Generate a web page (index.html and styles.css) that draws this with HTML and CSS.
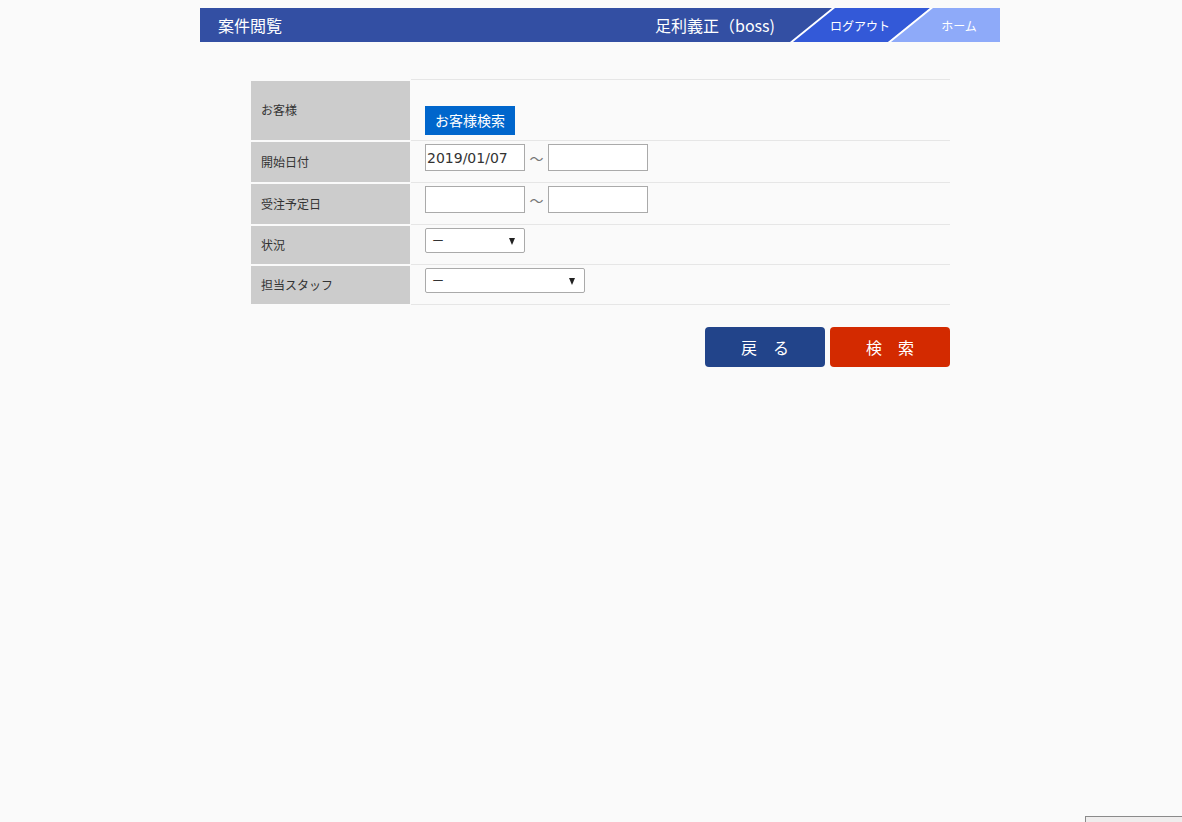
FILE: index.html
```html
<!DOCTYPE html>
<html lang="ja">
<head>
<meta charset="utf-8">
<title>案件閲覧</title>
<link rel="stylesheet" href="styles.css">
</head>
<body>
<div class="page">
  <header class="header">
    <h1 class="title">案件閲覧</h1>
    <div class="user">足利義正（boss)</div>
    <nav class="tabs">
      <a class="tab tab-logout" href="#">ログアウト</a>
      <a class="tab tab-home" href="#">ホーム</a>
    </nav>
  </header>

  <form class="search">
    <div class="rows">
      <div class="row row-first row-tall">
        <div class="label">お客様</div>
        <div class="value value-customer">
          <button type="button" class="btn-customer">お客様検索</button>
        </div>
      </div>
      <div class="row row-mid">
        <div class="label">開始日付</div>
        <div class="value">
          <span class="range">
            <input class="date" type="text" value="2019/01/07">
            <span class="tilde">～</span>
            <input class="date" type="text" value="">
          </span>
        </div>
      </div>
      <div class="row row-mid">
        <div class="label">受注予定日</div>
        <div class="value">
          <span class="range">
            <input class="date" type="text" value="">
            <span class="tilde">～</span>
            <input class="date" type="text" value="">
          </span>
        </div>
      </div>
      <div class="row row-short">
        <div class="label">状況</div>
        <div class="value">
          <span class="select select-sm"><span class="select-text">ー</span></span>
        </div>
      </div>
      <div class="row row-short">
        <div class="label">担当スタッフ</div>
        <div class="value">
          <span class="select select-lg"><span class="select-text">ー</span></span>
        </div>
      </div>
    </div>

    <div class="actions">
      <button type="button" class="btn btn-back">戻　る</button>
      <button type="button" class="btn btn-search">検　索</button>
    </div>
  </form>
</div>
<div class="corner-box"></div>
</body>
</html>
```

FILE: styles.css
```css
html, body {
  margin: 0;
  padding: 0;
  background: #fafafa;
  font-family: "Noto Sans CJK JP", "Noto Sans", sans-serif;
  color: #333;
}

.page {
  width: 800px;
  margin-left: 200px;
  padding-top: 8px;
}

/* Header */
.header {
  display: flex;
  align-items: center;
  height: 34px;
  background: #334fa3;
  color: #fff;
  overflow: hidden;
}

.title {
  margin: 0;
  padding-left: 18px;
  font-size: 16px;
  font-weight: normal;
  line-height: 34px;
  flex: 1;
}

.user {
  font-size: 16px;
  line-height: 34px;
  margin-right: 36px;
}

.tabs {
  display: flex;
  height: 34px;
}

.tab {
  position: relative;
  isolation: isolate;
  display: flex;
  align-items: center;
  justify-content: center;
  height: 34px;
  color: #fff;
  text-decoration: none;
  font-size: 12px;
}

.tab::before {
  content: "";
  position: absolute;
  top: 0;
  bottom: 0;
  left: 0;
  right: 0;
  transform: skewX(-51deg);
  border-left: 3px solid #fff;
  z-index: -1;
}

.tab-logout {
  width: 98px;
}

.tab-logout::before {
  background: #3359d8;
}

.tab-home {
  width: 91px;
  padding-left: 9px;
  box-sizing: border-box;
}

.tab-home::before {
  background: #8eaaf9;
  right: -40px;
}

/* Form */
.search {
  margin-left: 51px;
  width: 699px;
  padding-top: 37px;
}

.rows {
  display: flex;
  flex-direction: column;
}

.row {
  display: flex;
}

.label {
  width: 159px;
  flex: none;
  margin: 1px 1px 1px 0;
  background: #cccccc;
  display: flex;
  align-items: center;
  padding: 0 0 2px 10px;
  box-sizing: border-box;
  font-size: 12px;
  color: #333;
}

.value {
  flex: 1;
  border-bottom: 1px solid #e6e6e6;
  padding-left: 14px;
  padding-top: 3px;
  box-sizing: border-box;
  display: flex;
  align-items: flex-start;
}

.row-first .value {
  border-top: 1px solid #e6e6e6;
}

.row-first .label {
  margin-top: 2px;
}

.row-tall .value {
  height: 62px;
  padding-top: 26px;
}

.row-mid .value {
  height: 42px;
}

.row-short .value {
  height: 40px;
}

.btn-customer {
  height: 29px;
  padding: 0 10px;
  border: none;
  background: #0066cc;
  color: #fff;
  font-family: "Noto Sans CJK JP", sans-serif;
  font-size: 14px;
  line-height: 29px;
  cursor: pointer;
}

.range {
  display: flex;
  align-items: center;
}

.date {
  width: 100px;
  height: 27px;
  box-sizing: border-box;
  border: 1px solid #aaaaaa;
  background: #fff;
  padding: 0 1px;
  margin: 0;
  font-family: "DejaVu Sans", "Noto Sans CJK JP", sans-serif;
  font-size: 14px;
  color: #333;
}

.tilde {
  width: 23px;
  text-align: center;
  color: #777;
  font-size: 14px;
}

.select {
  position: relative;
  display: flex;
  align-items: center;
  height: 25px;
  box-sizing: border-box;
  border: 1px solid #aaaaaa;
  border-radius: 2px;
  background: #fff;
  padding-left: 6px;
}

.select::after {
  content: "";
  position: absolute;
  right: 9px;
  top: 9px;
  border-left: 3.5px solid transparent;
  border-right: 3.5px solid transparent;
  border-top: 7px solid #222;
}

.select-sm {
  width: 100px;
}

.select-lg {
  width: 160px;
}

.select-text {
  font-size: 12px;
  color: #333;
}

.actions {
  display: flex;
  justify-content: flex-end;
  gap: 5px;
  margin-top: 22px;
}

.btn {
  width: 120px;
  height: 40px;
  border: none;
  border-radius: 4px;
  color: #fff;
  font-family: "Noto Sans CJK JP", sans-serif;
  font-size: 16px;
  cursor: pointer;
}

.btn-back {
  background: #22448a;
}

.btn-search {
  background: #d32a00;
}

.corner-box {
  position: fixed;
  left: 1085px;
  top: 816px;
  width: 120px;
  height: 30px;
  border: 1px solid #8a8a8a;
  background: #efeded;
}
```
